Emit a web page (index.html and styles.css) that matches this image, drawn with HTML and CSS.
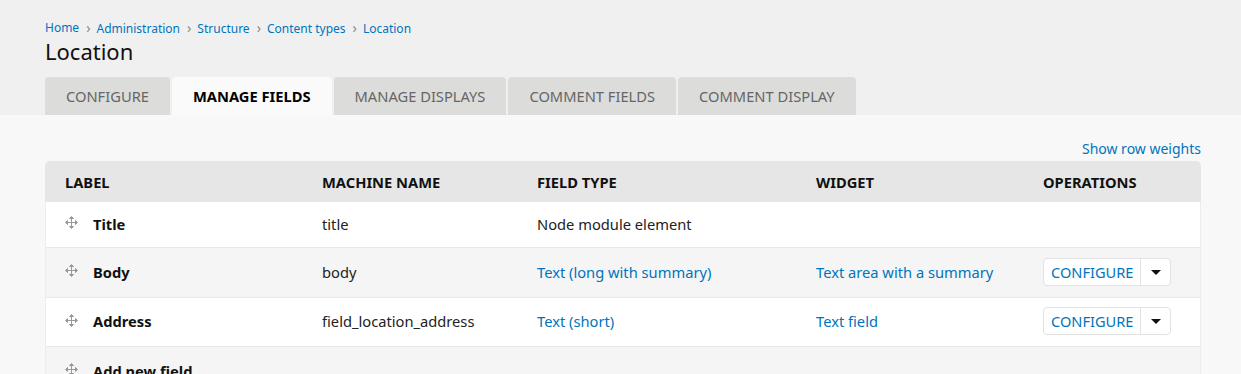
FILE: index.html
```html
<!DOCTYPE html>
<html lang="en">
<head>
  <meta charset="UTF-8">
  <title>Manage fields | Location</title>
  <link rel="stylesheet" href="styles.css">
</head>
<body>

<!-- CABEÇALHO -->
<div class="header">
  <ol class="breadcrumb">
    <li><a href="#">Home</a></li>
    <li><a href="#">Administration</a></li>
    <li><a href="#">Structure</a></li>
    <li><a href="#">Content types</a></li>
    <li><a href="#">Location</a></li>
  </ol>
  <h1 class="page-title">Location</h1>
  <ul class="tabs">
    <li><a href="#">Configure</a></li>
    <li class="active"><a href="#">Manage fields</a></li>
    <li><a href="#">Manage displays</a></li>
    <li><a href="#">Comment fields</a></li>
    <li><a href="#">Comment display</a></li>
  </ul>
</div>

<!-- CONTEÚDO -->
<div class="content">
  <div class="weights"><a href="#">Show row weights</a></div>
  <table class="fields">
    <thead>
      <tr>
        <th class="col-label">Label</th>
        <th class="col-machine">Machine name</th>
        <th class="col-type">Field type</th>
        <th class="col-widget">Widget</th>
        <th>Operations</th>
      </tr>
    </thead>
    <tbody>
      <tr class="short">
        <td><svg class="handle" viewBox="0 0 13 13"><path d="M6.5 1v11M1 6.5h11M6.5 0.5l-2 2h4zM6.5 12.5l-2-2h4zM0.5 6.5l2-2v4zM12.5 6.5l-2-2v4z"/></svg><strong>Title</strong></td>
        <td>title</td>
        <td>Node module element</td>
        <td></td>
        <td></td>
      </tr>
      <tr class="even">
        <td><svg class="handle" viewBox="0 0 13 13"><path d="M6.5 1v11M1 6.5h11M6.5 0.5l-2 2h4zM6.5 12.5l-2-2h4zM0.5 6.5l2-2v4zM12.5 6.5l-2-2v4z"/></svg><strong>Body</strong></td>
        <td>body</td>
        <td><a href="#">Text (long with summary)</a></td>
        <td><a href="#">Text area with a summary</a></td>
        <td><div class="dropbutton"><a href="#">Configure</a><span class="toggle"></span></div></td>
      </tr>
      <tr>
        <td><svg class="handle" viewBox="0 0 13 13"><path d="M6.5 1v11M1 6.5h11M6.5 0.5l-2 2h4zM6.5 12.5l-2-2h4zM0.5 6.5l2-2v4zM12.5 6.5l-2-2v4z"/></svg><strong>Address</strong></td>
        <td>field_location_address</td>
        <td><a href="#">Text (short)</a></td>
        <td><a href="#">Text field</a></td>
        <td><div class="dropbutton"><a href="#">Configure</a><span class="toggle"></span></div></td>
      </tr>
      <tr class="even">
        <td><svg class="handle" viewBox="0 0 13 13"><path d="M6.5 1v11M1 6.5h11M6.5 0.5l-2 2h4zM6.5 12.5l-2-2h4zM0.5 6.5l2-2v4zM12.5 6.5l-2-2v4z"/></svg><strong>Add new field</strong></td>
        <td></td>
        <td></td>
        <td></td>
        <td></td>
      </tr>
    </tbody>
  </table>
</div>

</body>
</html>
```

FILE: styles.css
```css
body { font-family: "Noto Sans", "Open Sans", sans-serif; margin: 0; padding: 0; background: #f8f8f8; color: #222; font-size: 14px; }
a { color: #0074bd; text-decoration: none; }

/* CABEÇALHO */
.header { background: #f0f0f0; padding: 19px 45px 0; }
.breadcrumb { list-style: none; margin: 0; padding: 0; display: flex; font-size: 12px; line-height: 18px; }
.breadcrumb li + li::before { content: "›"; color: #888; font-size: 14px; margin: 0 6px 0 7px; }
.page-title { margin: -2px 0 11px; font-size: 22px; font-weight: normal; line-height: 30px; color: #111; }

.tabs { list-style: none; margin: 0; padding: 0; display: flex; gap: 2px; }
.tabs li { background: #dcdcdb; border-radius: 4px 4px 0 0; height: 38px; }
.tabs a { display: block; padding: 0 21px; line-height: 38px; color: #666; text-transform: uppercase; font-size: 14.7px; }
.tabs li.active { background: #fafafa; }
.tabs li.active a { color: #000; font-weight: bold; }

/* TABELA */
.content { padding: 21px 40px 0 45px; }
.weights { text-align: right; font-size: 14px; line-height: 26px; margin-bottom: -1px; }
.fields { width: 100%; border-collapse: separate; border-spacing: 0; font-size: 14.7px; }
.fields th { background: #e6e6e6; text-align: left; text-transform: uppercase; font-weight: bold; font-size: 14.7px; color: #111; height: 41px; padding: 0 0 0 20px; }
.fields th:first-child { border-top-left-radius: 5px; }
.fields th:last-child { border-top-right-radius: 5px; }
.col-label { width: 237px; }
.col-machine { width: 195px; }
.col-type { width: 259px; }
.col-widget { width: 207px; }
.fields td { background: #fff; height: 46px; padding: 0 0 2px 20px; border-bottom: 1px solid #e8e8e8; color: #222; }
.fields tr.short td { height: 43px; }
.fields tr.even td { background: #f5f5f5; height: 47px; }
.fields td:first-child { padding-left: 19px; border-left: 1px solid #ededed; }
.fields td:last-child { border-right: 1px solid #ededed; }
.fields td strong { color: #111; }

.handle { width: 13px; height: 13px; margin: 0 15px 0 0; position: relative; top: -3px; vertical-align: middle; fill: #999; stroke: #999; stroke-width: 1; }

.dropbutton { display: inline-flex; border: 1px solid #e2e2e2; border-radius: 4px; background: #fff; height: 26px; align-items: center; }
.dropbutton a { padding: 0 7px; line-height: 26px; text-transform: uppercase; font-size: 14.6px; border-right: 1px solid #e2e2e2; }
.dropbutton .toggle { width: 29px; height: 26px; position: relative; }
.dropbutton .toggle::after { content: ""; position: absolute; left: 10px; top: 11px; border-left: 5px solid transparent; border-right: 5px solid transparent; border-top: 5px solid #111; }
```
